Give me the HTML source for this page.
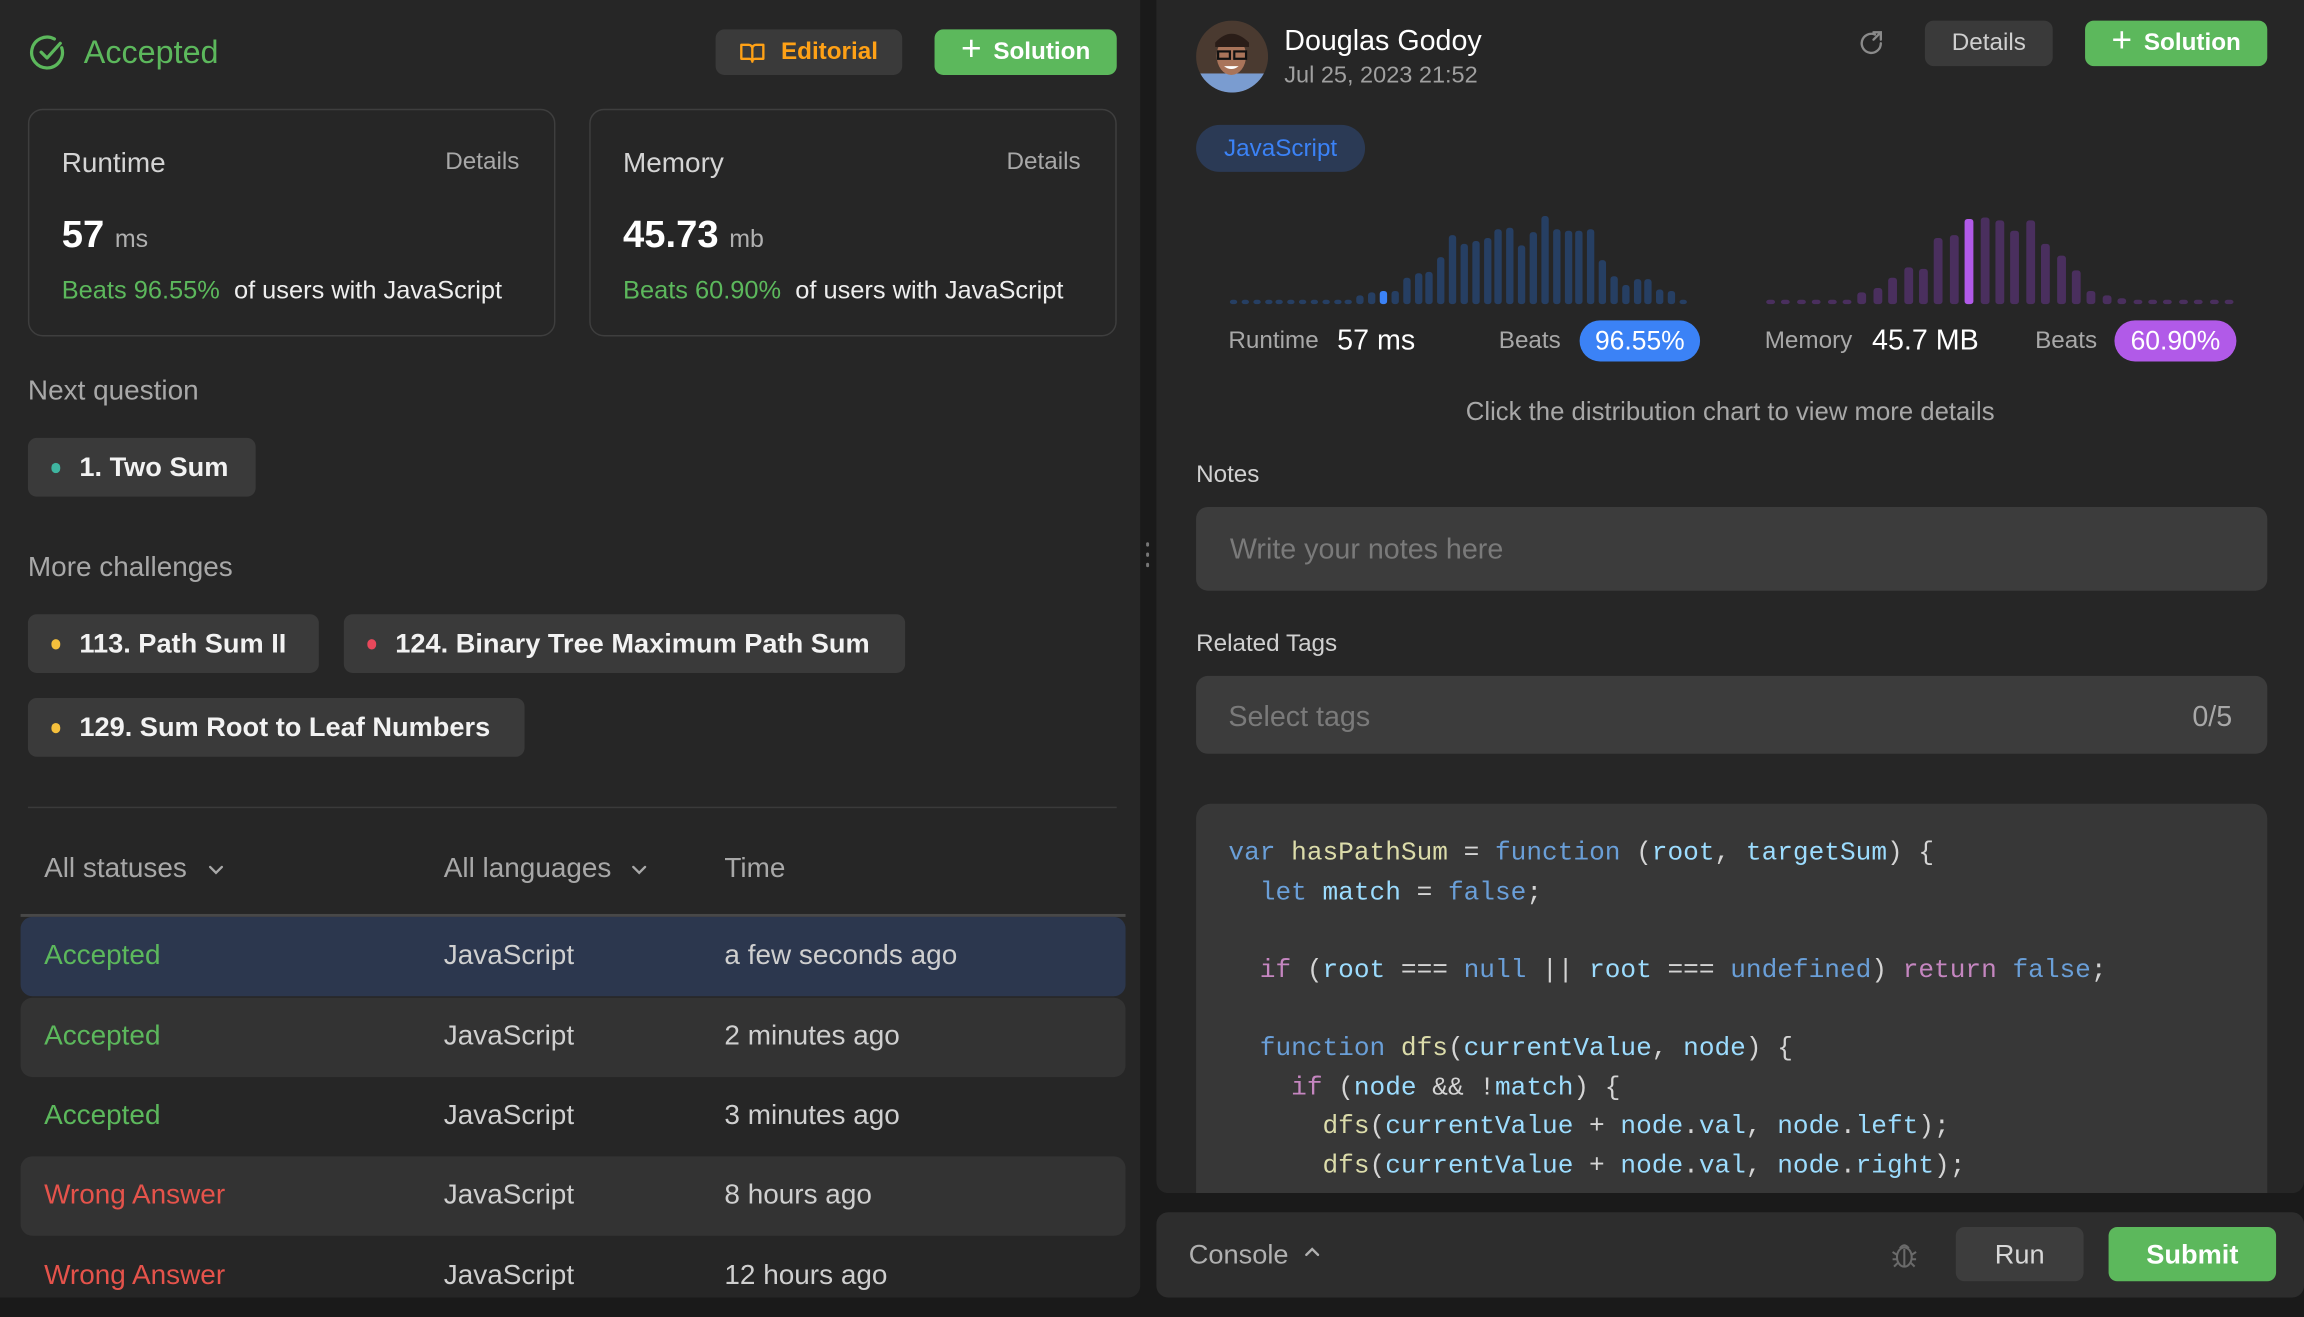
<!DOCTYPE html>
<html><head><meta charset="utf-8"><style>
*{box-sizing:border-box;margin:0;padding:0}
html,body{width:2304px;height:1306px;overflow:hidden;background:#1a1a1a}
#s{position:absolute;left:0;top:0;width:1568px;height:889px;transform:scale(1.46939);transform-origin:0 0;font-family:"Liberation Sans",sans-serif;color:#eee}
.a{position:absolute;white-space:nowrap}
.panel{background:#262626;position:absolute}
.btn{position:absolute;border-radius:6px;display:flex;align-items:center;justify-content:center;font-size:16.5px;font-weight:bold}
.card{position:absolute;border:1px solid #3e3e3e;border-radius:10px}
.chip{position:absolute;height:40px;background:#3a3a3a;border-radius:6px;font-size:18.5px;font-weight:bold;color:#f2f2f2;display:flex;align-items:center;padding-left:35px}
.chip i{position:absolute;left:16px;top:17px;width:6px;height:7px;border-radius:3px}
.row{position:absolute;left:14px;width:752px;height:54px;border-radius:8px;font-size:19px}
.row span{position:absolute;top:16px}
.g{color:#5cb85c}.r{color:#e5534b}.w{color:#cfcfcf}
.code{font-family:"Liberation Mono",monospace;font-size:17.8px;position:absolute;left:836px;white-space:pre;color:#d4d4d4}
.k{color:#6a9fd8}.f{color:#dcdcaa}.v{color:#9cdcfe}.p{color:#c586c0}
</style></head><body><div id="s">
<div class="panel" style="left:0;top:0;width:776px;height:883px;border-radius:0 0 8px 0"></div>
<svg class="a" style="left:20px;top:23px" width="26" height="26" viewBox="0 0 26 26"><path d="M22 9.5A10.5 10.5 0 1 1 17 3.5" fill="none" stroke="#5cb85c" stroke-width="2.2" stroke-linecap="round"/><path d="M8 12.5l4 4 9-10" fill="none" stroke="#5cb85c" stroke-width="2.2" stroke-linecap="round" stroke-linejoin="round"/></svg>
<div class="a g" style="left:57px;top:23px;font-size:22px;font-weight:500">Accepted</div>
<div class="btn" style="left:487px;top:20px;width:127px;height:31px;background:#3a3a3a;color:#ffa116"><svg width="18" height="16" viewBox="0 0 18 16" style="margin-right:10px"><path d="M1.5 2.5h5a2.5 2.5 0 0 1 2.5 2.5v9a2 2 0 0 0-2-2h-5.5zM16.5 2.5h-5a2.5 2.5 0 0 0-2.5 2.5v9a2 2 0 0 1 2-2h5.5z" fill="none" stroke="#ffa116" stroke-width="1.6" stroke-linejoin="round"/></svg>Editorial</div>
<div class="btn" style="left:636px;top:20px;width:124px;height:31px;background:#5cb85c;color:#fff"><span style="font-size:24px;font-weight:300;margin-right:8px;margin-top:-3px">+</span>Solution</div>
<div class="card" style="left:19px;top:74px;width:359px;height:155px"></div>
<div class="card" style="left:401px;top:74px;width:359px;height:155px"></div>
<div class="a" style="left:42px;top:101px;font-size:19px;color:#d4d4d4">Runtime</div>
<div class="a" style="left:303px;top:101px;font-size:16.5px;color:#a8a8a8">Details</div>
<div class="a" style="left:42px;top:144px;font-size:26px;font-weight:bold;color:#fff">57 <span style="font-size:17px;font-weight:normal;color:#b0b0b0">ms</span></div>
<div class="a" style="left:42px;top:187px;font-size:17.3px;color:#eee"><span class="g">Beats 96.55%</span>&nbsp; of users with JavaScript</div>
<div class="a" style="left:424px;top:101px;font-size:19px;color:#d4d4d4">Memory</div>
<div class="a" style="left:685px;top:101px;font-size:16.5px;color:#a8a8a8">Details</div>
<div class="a" style="left:424px;top:144px;font-size:26px;font-weight:bold;color:#fff">45.73 <span style="font-size:17px;font-weight:normal;color:#b0b0b0">mb</span></div>
<div class="a" style="left:424px;top:187px;font-size:17.3px;color:#eee"><span class="g">Beats 60.90%</span>&nbsp; of users with JavaScript</div>
<div class="a" style="left:19px;top:256px;font-size:19px;color:#a8a8a8">Next question</div>
<div class="chip" style="left:19px;top:298px;width:155px"><i style="background:#3fb5a0"></i>1. Two Sum</div>
<div class="a" style="left:19px;top:376px;font-size:19px;color:#a8a8a8">More challenges</div>
<div class="chip" style="left:19px;top:418px;width:198px"><i style="background:#f5c03c"></i>113. Path Sum II</div>
<div class="chip" style="left:234px;top:418px;width:382px"><i style="background:#e9485b"></i>124. Binary Tree Maximum Path Sum</div>
<div class="chip" style="left:19px;top:475px;width:338px"><i style="background:#f5c03c"></i>129. Sum Root to Leaf Numbers</div>
<div class="a" style="left:19px;top:549px;width:741px;height:1px;background:#3a3a3a"></div>
<div class="a" style="left:30px;top:581px;font-size:19px;color:#a8a8a8">All statuses</div>
<svg class="a" style="left:141px;top:586px" width="12" height="12" viewBox="0 0 12 12"><path d="M2 4l4 4 4-4" fill="none" stroke="#a8a8a8" stroke-width="1.6" stroke-linecap="round"/></svg>
<div class="a" style="left:302px;top:581px;font-size:19px;color:#a8a8a8">All languages</div>
<svg class="a" style="left:429px;top:586px" width="12" height="12" viewBox="0 0 12 12"><path d="M2 4l4 4 4-4" fill="none" stroke="#a8a8a8" stroke-width="1.6" stroke-linecap="round"/></svg>
<div class="a" style="left:493px;top:581px;font-size:19px;color:#a8a8a8">Time</div>
<div class="a" style="left:14px;top:622px;width:752px;height:2px;background:#484848"></div>
<div class="row" style="top:624px;background:#2c374e"><span class="g" style="left:16px">Accepted</span><span class="w" style="left:288px">JavaScript</span><span class="w" style="left:479px">a few seconds ago</span></div>
<div class="row" style="top:679px;background:#333"><span class="g" style="left:16px">Accepted</span><span class="w" style="left:288px">JavaScript</span><span class="w" style="left:479px">2 minutes ago</span></div>
<div class="row" style="top:733px"><span class="g" style="left:16px">Accepted</span><span class="w" style="left:288px">JavaScript</span><span class="w" style="left:479px">3 minutes ago</span></div>
<div class="row" style="top:787px;background:#333"><span class="r" style="left:16px">Wrong Answer</span><span class="w" style="left:288px">JavaScript</span><span class="w" style="left:479px">8 hours ago</span></div>
<div class="row" style="top:842px"><span class="r" style="left:16px">Wrong Answer</span><span class="w" style="left:288px">JavaScript</span><span class="w" style="left:479px">12 hours ago</span></div>
<div class="a" style="left:780px;top:369px;width:2px;height:3px;background:#777;border-radius:1px"></div>
<div class="a" style="left:780px;top:376px;width:2px;height:3px;background:#777;border-radius:1px"></div>
<div class="a" style="left:780px;top:383px;width:2px;height:3px;background:#777;border-radius:1px"></div>
<div class="panel" style="left:787px;top:0;width:781px;height:812px;border-radius:0 0 8px 8px"></div>
<svg class="a" style="left:814px;top:14px" width="49" height="49" viewBox="0 0 49 49"><defs><clipPath id="c"><circle cx="24.5" cy="24.5" r="24.5"/></clipPath></defs><g clip-path="url(#c)"><rect width="49" height="49" fill="#4a3a30"/><rect y="36" width="49" height="13" fill="#7a9cd0"/><ellipse cx="24" cy="24" rx="10" ry="13" fill="#a9745a"/><path d="M13 15q11-12 23 0v3h-23z" fill="#2a1d18"/><rect x="15" y="21" width="8" height="5" fill="none" stroke="#111" stroke-width="1.5"/><rect x="26" y="21" width="8" height="5" fill="none" stroke="#111" stroke-width="1.5"/><path d="M19 31q5 4 10 0" fill="#fff"/></g></svg>
<div class="a" style="left:874px;top:17px;font-size:19.5px;font-weight:500;color:#fff">Douglas Godoy</div>
<div class="a" style="left:874px;top:43px;font-size:16px;color:#a0a0a0">Jul 25, 2023 21:52</div>
<svg class="a" style="left:1264px;top:20px" width="20" height="20" viewBox="0 0 20 20"><path d="M16 9.5A6.5 6.5 0 1 1 12 3.5" fill="none" stroke="#8a8a8a" stroke-width="1.6" stroke-linecap="round"/><path d="M11 2h5v5M16 2l-5 5" fill="none" stroke="#8a8a8a" stroke-width="1.6" stroke-linecap="round"/></svg>
<div class="btn" style="left:1310px;top:14px;width:87px;height:31px;background:#3a3a3a;color:#cfcfcf;font-weight:500">Details</div>
<div class="btn" style="left:1419px;top:14px;width:124px;height:31px;background:#5cb85c;color:#fff"><span style="font-size:24px;font-weight:300;margin-right:8px;margin-top:-3px">+</span>Solution</div>
<div class="a" style="left:814px;top:85px;width:115px;height:32px;border-radius:16px;background:#2b3a55;color:#3b82f6;font-size:16.5px;font-weight:500;text-align:center;line-height:32px">JavaScript</div>
<svg class="a" style="left:0;top:0" width="1568" height="260">
<g fill="#263f63">
<rect x="837" y="204" width="5" height="3" rx="2"/><rect x="845" y="204" width="5" height="3" rx="2"/><rect x="853" y="204" width="5" height="3" rx="2"/><rect x="861" y="204" width="5" height="3" rx="2"/><rect x="868" y="204" width="5" height="3" rx="2"/><rect x="876" y="204" width="5" height="3" rx="2"/><rect x="884" y="204" width="5" height="3" rx="2"/><rect x="892" y="204" width="5" height="3" rx="2"/><rect x="900" y="204" width="5" height="3" rx="2"/><rect x="908" y="204" width="5" height="3" rx="2"/><rect x="915" y="204" width="5" height="3" rx="2"/><rect x="923" y="201" width="5" height="6" rx="2"/><rect x="931" y="199" width="5" height="8" rx="2"/>
<rect x="947" y="198" width="5" height="9" rx="2"/><rect x="955" y="189" width="5" height="18" rx="2"/><rect x="963" y="186" width="5" height="21" rx="2"/><rect x="970" y="185" width="5" height="22" rx="2"/><rect x="978" y="175" width="5" height="32" rx="2"/><rect x="986" y="160" width="5" height="47" rx="2"/><rect x="994" y="166" width="5" height="41" rx="2"/><rect x="1002" y="164" width="5" height="43" rx="2"/><rect x="1010" y="162" width="5" height="45" rx="2"/><rect x="1017" y="156" width="5" height="51" rx="2"/><rect x="1025" y="155" width="5" height="52" rx="2"/><rect x="1033" y="167" width="5" height="40" rx="2"/><rect x="1041" y="158" width="5" height="49" rx="2"/><rect x="1049" y="147" width="5" height="60" rx="2"/><rect x="1057" y="156" width="5" height="51" rx="2"/><rect x="1065" y="157" width="5" height="50" rx="2"/><rect x="1072" y="157" width="5" height="50" rx="2"/><rect x="1080" y="156" width="5" height="51" rx="2"/><rect x="1088" y="177" width="5" height="30" rx="2"/><rect x="1096" y="188" width="5" height="19" rx="2"/><rect x="1104" y="194" width="5" height="13" rx="2"/><rect x="1112" y="190" width="5" height="17" rx="2"/><rect x="1119" y="190" width="5" height="17" rx="2"/><rect x="1127" y="197" width="5" height="10" rx="2"/><rect x="1135" y="198" width="5" height="9" rx="2"/><rect x="1143" y="204" width="5" height="3" rx="2"/></g>
<rect x="939" y="198" width="5" height="9" rx="2" fill="#3b82f6"/>
<g fill="#4a2f5e">
<rect x="1202" y="204" width="6" height="3" rx="2"/><rect x="1212" y="204" width="6" height="3" rx="2"/><rect x="1223" y="204" width="6" height="3" rx="2"/><rect x="1233" y="204" width="6" height="3" rx="2"/><rect x="1244" y="204" width="6" height="3" rx="2"/><rect x="1254" y="204" width="6" height="3" rx="2"/><rect x="1264" y="199" width="6" height="8" rx="2"/><rect x="1275" y="196" width="6" height="11" rx="2"/><rect x="1285" y="189" width="6" height="18" rx="2"/><rect x="1296" y="182" width="6" height="25" rx="2"/><rect x="1306" y="183" width="6" height="24" rx="2"/><rect x="1316" y="162" width="6" height="45" rx="2"/><rect x="1327" y="160" width="6" height="47" rx="2"/>
<rect x="1348" y="148" width="6" height="59" rx="2"/><rect x="1358" y="150" width="6" height="57" rx="2"/><rect x="1368" y="157" width="6" height="50" rx="2"/><rect x="1379" y="150" width="6" height="57" rx="2"/><rect x="1389" y="166" width="6" height="41" rx="2"/><rect x="1400" y="174" width="6" height="33" rx="2"/><rect x="1410" y="184" width="6" height="23" rx="2"/><rect x="1420" y="198" width="6" height="9" rx="2"/><rect x="1431" y="201" width="6" height="6" rx="2"/><rect x="1441" y="203" width="6" height="4" rx="2"/><rect x="1452" y="204" width="6" height="3" rx="2"/><rect x="1462" y="204" width="6" height="3" rx="2"/><rect x="1472" y="204" width="6" height="3" rx="2"/><rect x="1483" y="204" width="6" height="3" rx="2"/><rect x="1493" y="204" width="6" height="3" rx="2"/><rect x="1504" y="204" width="6" height="3" rx="2"/><rect x="1514" y="204" width="6" height="3" rx="2"/></g>
<rect x="1337" y="149" width="6" height="58" rx="2" fill="#b15ae8"/>
</svg>
<div class="a" style="left:836px;top:223px;font-size:16.5px;color:#a8a8a8">Runtime</div>
<div class="a" style="left:910px;top:221px;font-size:19.5px;font-weight:500;color:#fff">57 ms</div>
<div class="a" style="left:1020px;top:223px;font-size:16.5px;color:#a8a8a8">Beats</div>
<div class="a" style="left:1075px;top:218px;width:82px;height:28px;border-radius:14px;background:#3b82f6;color:#fff;font-size:18px;font-weight:500;text-align:center;line-height:28px">96.55%</div>
<div class="a" style="left:1201px;top:223px;font-size:16.5px;color:#a8a8a8">Memory</div>
<div class="a" style="left:1274px;top:221px;font-size:19.5px;font-weight:500;color:#fff">45.7 MB</div>
<div class="a" style="left:1385px;top:223px;font-size:16.5px;color:#a8a8a8">Beats</div>
<div class="a" style="left:1439px;top:218px;width:83px;height:28px;border-radius:14px;background:#b15ae8;color:#fff;font-size:18px;font-weight:500;text-align:center;line-height:28px">60.90%</div>
<div class="a" style="left:787px;width:781px;top:270px;text-align:center;font-size:17.5px;color:#a8a8a8">Click the distribution chart to view more details</div>
<div class="a" style="left:814px;top:314px;font-size:16.5px;color:#d0d0d0">Notes</div>
<div class="a" style="left:814px;top:345px;width:729px;height:57px;border-radius:8px;background:#3c3c3c"></div>
<div class="a" style="left:837px;top:363px;font-size:19.5px;color:#7a7a7a">Write your notes here</div>
<div class="a" style="left:814px;top:429px;font-size:16.5px;color:#d0d0d0">Related Tags</div>
<div class="a" style="left:814px;top:460px;width:729px;height:53px;border-radius:8px;background:#3c3c3c"></div>
<div class="a" style="left:836px;top:477px;font-size:19.5px;color:#7a7a7a">Select tags</div>
<div class="a" style="left:1492px;top:477px;font-size:19.5px;color:#a8a8a8">0/5</div>
<div class="a" style="left:814px;top:547px;width:729px;height:265px;border-radius:10px 10px 0 0;background:#373737"></div>
<div class="code" style="top:571px"><span class="k">var</span> <span class="f">hasPathSum</span> = <span class="k">function</span> (<span class="v">root</span>, <span class="v">targetSum</span>) {</div>
<div class="code" style="top:598px">  <span class="k">let</span> <span class="v">match</span> = <span class="k">false</span>;</div>
<div class="code" style="top:651px">  <span class="p">if</span> (<span class="v">root</span> === <span class="k">null</span> || <span class="v">root</span> === <span class="k">undefined</span>) <span class="p">return</span> <span class="k">false</span>;</div>
<div class="code" style="top:704px">  <span class="k">function</span> <span class="f">dfs</span>(<span class="v">currentValue</span>, <span class="v">node</span>) {</div>
<div class="code" style="top:731px">    <span class="p">if</span> (<span class="v">node</span> &amp;&amp; !<span class="v">match</span>) {</div>
<div class="code" style="top:757px">      <span class="f">dfs</span>(<span class="v">currentValue</span> + <span class="v">node</span>.<span class="v">val</span>, <span class="v">node</span>.<span class="v">left</span>);</div>
<div class="code" style="top:784px">      <span class="f">dfs</span>(<span class="v">currentValue</span> + <span class="v">node</span>.<span class="v">val</span>, <span class="v">node</span>.<span class="v">right</span>);</div>
<div class="a" style="left:787px;top:812px;width:781px;height:13px;background:#1a1a1a"></div>
<div class="panel" style="left:787px;top:825px;width:781px;height:58px;background:#2d2d2d;border-radius:8px"></div>
<div class="a" style="left:809px;top:843px;font-size:18.5px;color:#b0b0b0">Console</div>
<svg class="a" style="left:886px;top:846px" width="14" height="12" viewBox="0 0 14 12"><path d="M3 8l4-4 4 4" fill="none" stroke="#b0b0b0" stroke-width="1.6" stroke-linecap="round"/></svg>
<svg class="a" style="left:1286px;top:844px" width="20" height="20" viewBox="0 0 20 20" fill="none" stroke="#6a6a6a" stroke-width="1.4"><ellipse cx="10" cy="11.5" rx="5" ry="6.5"/><path d="M7 5.5q3-4 6 0M10 6v12M2 8l3 2M18 8l-3 2M2 13h3M18 13h-3M3 18l2.5-2.5M17 18l-2.5-2.5"/></svg>
<div class="btn" style="left:1331px;top:835px;width:87px;height:37px;background:#3d3d3d;color:#d8d8d8;font-size:18.5px;font-weight:500">Run</div>
<div class="btn" style="left:1435px;top:835px;width:114px;height:37px;background:#5cb85c;color:#fff;font-size:18.5px">Submit</div>
</div></body></html>
